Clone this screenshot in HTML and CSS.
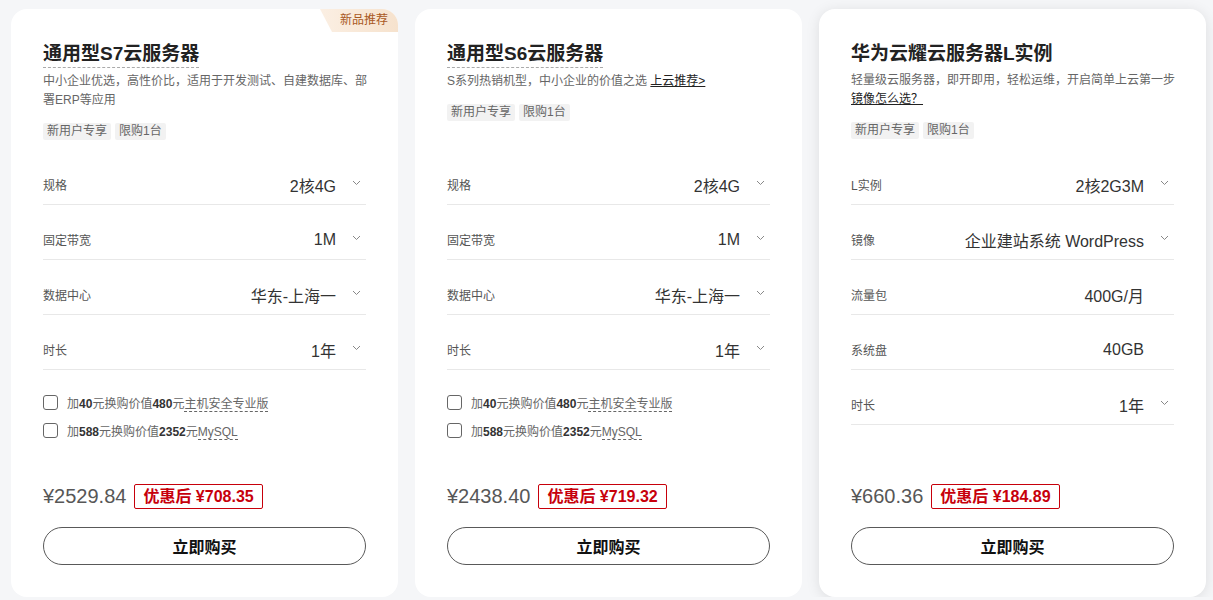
FILE: index.html
```html
<!DOCTYPE html>
<html>
  <head>
    <title>云服务器推荐</title>
    <link rel="stylesheet" href="styles.css">
  </head>
  <body>
    <div class="plans">
      <div class="card">
        <span class="badge">新品推荐</span>
        <div class="card-head">
          <h3 class="title dashed">通用型S7云服务器</h3>
          <p class="desc">中小企业优选，高性价比，适用于开发测试、自建数据库、部署ERP等应用</p>
          <div class="tags">
            <span class="tag">新用户专享</span>
            <span class="tag">限购1台</span>
          </div>
        </div>
        <div class="spec">
          <div class="spec-row">
            <span class="spec-label">规格</span>
            <span class="spec-value">2核4G</span>
            <span class="arrow"><svg width="9" height="6" viewBox="0 0 9 6"><polyline points="1,1 4.5,4.5 8,1" /></svg></span>
          </div>
          <div class="spec-row">
            <span class="spec-label">固定带宽</span>
            <span class="spec-value">1M</span>
            <span class="arrow"><svg width="9" height="6" viewBox="0 0 9 6"><polyline points="1,1 4.5,4.5 8,1" /></svg></span>
          </div>
          <div class="spec-row">
            <span class="spec-label">数据中心</span>
            <span class="spec-value">华东-上海一</span>
            <span class="arrow"><svg width="9" height="6" viewBox="0 0 9 6"><polyline points="1,1 4.5,4.5 8,1" /></svg></span>
          </div>
          <div class="spec-row">
            <span class="spec-label">时长</span>
            <span class="spec-value">1年</span>
            <span class="arrow"><svg width="9" height="6" viewBox="0 0 9 6"><polyline points="1,1 4.5,4.5 8,1" /></svg></span>
          </div>
        </div>
        <div class="extras">
          <label class="extra"><span class="box"></span><span>加<b>40</b>元换购价值<b>480</b>元<span class="tip">主机安全专业版</span></span></label>
          <label class="extra"><span class="box"></span><span>加<b>588</b>元换购价值<b>2352</b>元<span class="tip">MySQL</span></span></label>
        </div>
        <div class="buy">
          <div class="price-line">
            <span class="price">¥2529.84</span>
            <span class="deal">优惠后 ¥708.35</span>
          </div>
          <button class="buy-btn">立即购买</button>
        </div>
      </div>

      <div class="card">
        <div class="card-head">
          <h3 class="title dashed">通用型S6云服务器</h3>
          <p class="desc">S系列热销机型，中小企业的价值之选 <a class="link" href="#">上云推荐&gt;</a></p>
          <div class="tags">
            <span class="tag">新用户专享</span>
            <span class="tag">限购1台</span>
          </div>
        </div>
        <div class="spec">
          <div class="spec-row">
            <span class="spec-label">规格</span>
            <span class="spec-value">2核4G</span>
            <span class="arrow"><svg width="9" height="6" viewBox="0 0 9 6"><polyline points="1,1 4.5,4.5 8,1" /></svg></span>
          </div>
          <div class="spec-row">
            <span class="spec-label">固定带宽</span>
            <span class="spec-value">1M</span>
            <span class="arrow"><svg width="9" height="6" viewBox="0 0 9 6"><polyline points="1,1 4.5,4.5 8,1" /></svg></span>
          </div>
          <div class="spec-row">
            <span class="spec-label">数据中心</span>
            <span class="spec-value">华东-上海一</span>
            <span class="arrow"><svg width="9" height="6" viewBox="0 0 9 6"><polyline points="1,1 4.5,4.5 8,1" /></svg></span>
          </div>
          <div class="spec-row">
            <span class="spec-label">时长</span>
            <span class="spec-value">1年</span>
            <span class="arrow"><svg width="9" height="6" viewBox="0 0 9 6"><polyline points="1,1 4.5,4.5 8,1" /></svg></span>
          </div>
        </div>
        <div class="extras">
          <label class="extra"><span class="box"></span><span>加<b>40</b>元换购价值<b>480</b>元<span class="tip">主机安全专业版</span></span></label>
          <label class="extra"><span class="box"></span><span>加<b>588</b>元换购价值<b>2352</b>元<span class="tip">MySQL</span></span></label>
        </div>
        <div class="buy">
          <div class="price-line">
            <span class="price">¥2438.40</span>
            <span class="deal">优惠后 ¥719.32</span>
          </div>
          <button class="buy-btn">立即购买</button>
        </div>
      </div>

      <div class="card card-active">
        <div class="card-head">
          <h3 class="title">华为云耀云服务器L实例</h3>
          <p class="desc">轻量级云服务器，即开即用，轻松运维，开启简单上云第一步 <a class="link" href="#">镜像怎么选？</a></p>
          <div class="tags">
            <span class="tag">新用户专享</span>
            <span class="tag">限购1台</span>
          </div>
        </div>
        <div class="spec">
          <div class="spec-row">
            <span class="spec-label">L实例</span>
            <span class="spec-value">2核2G3M</span>
            <span class="arrow"><svg width="9" height="6" viewBox="0 0 9 6"><polyline points="1,1 4.5,4.5 8,1" /></svg></span>
          </div>
          <div class="spec-row">
            <span class="spec-label">镜像</span>
            <span class="spec-value">企业建站系统 WordPress</span>
            <span class="arrow"><svg width="9" height="6" viewBox="0 0 9 6"><polyline points="1,1 4.5,4.5 8,1" /></svg></span>
          </div>
          <div class="spec-row">
            <span class="spec-label">流量包</span>
            <span class="spec-value">400G/月</span>
            <span class="arrow"></span>
          </div>
          <div class="spec-row">
            <span class="spec-label">系统盘</span>
            <span class="spec-value">40GB</span>
            <span class="arrow"></span>
          </div>
          <div class="spec-row">
            <span class="spec-label">时长</span>
            <span class="spec-value">1年</span>
            <span class="arrow"><svg width="9" height="6" viewBox="0 0 9 6"><polyline points="1,1 4.5,4.5 8,1" /></svg></span>
          </div>
        </div>
        <div class="buy">
          <div class="price-line">
            <span class="price">¥660.36</span>
            <span class="deal">优惠后 ¥184.89</span>
          </div>
          <button class="buy-btn">立即购买</button>
        </div>
      </div>
    </div>
  </body>
</html>
```

FILE: styles.css
```css
*,
*::before,
*::after {
  margin: 0;
  padding: 0;
  box-sizing: border-box;
}

body {
  padding: 9px 7px 0 11px;
  font-family: "Liberation Sans", "Noto Sans CJK SC", sans-serif;
  color: #333;
  background: #f5f6f8;
  overflow: hidden;
}

.plans {
  display: grid;
  grid-template-columns: repeat(3, 387px);
  gap: 17px;
}

.card {
  position: relative;
  display: flex;
  flex-direction: column;
  height: 588px;
  padding: 32px;
  background: #fff;
  border-radius: 16px;
  overflow: hidden;
}

.card-active {
  box-shadow: 0 2px 14px rgba(0, 0, 0, 0.1);
}

.badge {
  position: absolute;
  top: 0;
  right: 0;
  width: 78px;
  height: 23px;
  padding-left: 20px;
  font-size: 12px;
  line-height: 23px;
  color: #a9581e;
  background: linear-gradient(to right, #fbefe3, #f6e2cd);
  clip-path: polygon(0 0, 100% 0, 100% 100%, 12px 100%);
}

.card-head {
  min-height: 109px;
}

.title {
  display: inline-block;
  font-size: 19px;
  line-height: 26px;
  font-weight: bold;
  color: #222;
}

.title.dashed {
  border-bottom: 1px dashed #aaa;
}

.desc {
  margin-top: 4px;
  margin-right: -3px;
  font-size: 12px;
  line-height: 19px;
  color: #666;
}

.link {
  color: #222;
  text-decoration: underline;
}

.tags {
  display: flex;
  gap: 4px;
  margin-top: 13px;
}

.tag {
  padding: 0 4px;
  font-size: 12px;
  line-height: 17px;
  color: #666;
  background: #f2f2f2;
  border-radius: 2px;
}

.spec-row {
  display: flex;
  align-items: center;
  height: 55px;
  padding-top: 15px;
  border-bottom: 1px solid #e8e8e8;
}

.spec-label {
  font-size: 12px;
  color: #555;
}

.spec-value {
  margin-left: auto;
  font-size: 16px;
  color: #333;
}

.arrow {
  display: flex;
  align-items: center;
  width: 30px;
  height: 16px;
  padding-left: 16px;
  padding-bottom: 4px;
}

.arrow polyline {
  fill: none;
  stroke: #888;
  stroke-width: 1;
}

.extras {
  display: flex;
  flex-direction: column;
  gap: 8px;
  margin-top: 22px;
}

.extra {
  display: flex;
  align-items: center;
  height: 20px;
  font-size: 12px;
  color: #666;
}

.extra b {
  color: #333;
}

.box {
  width: 15px;
  height: 15px;
  margin-right: 9px;
  border: 1px solid #666;
  border-radius: 3px;
}

.tip {
  border-bottom: 1px dashed #666;
}

.buy {
  margin-top: auto;
}

.price-line {
  display: flex;
  align-items: center;
  gap: 8px;
}

.price {
  font-size: 20px;
  color: #575757;
}

.deal {
  padding: 0 8px;
  font-size: 16px;
  line-height: 23px;
  font-weight: bold;
  color: #c7000b;
  border: 1px solid #c7000b;
  border-radius: 2px;
}

.buy-btn {
  display: block;
  width: 100%;
  height: 38px;
  margin-top: 18px;
  font-family: inherit;
  font-size: 16px;
  font-weight: bold;
  color: #111;
  background: #fff;
  border: 1px solid #595959;
  border-radius: 19px;
  cursor: pointer;
}
```
